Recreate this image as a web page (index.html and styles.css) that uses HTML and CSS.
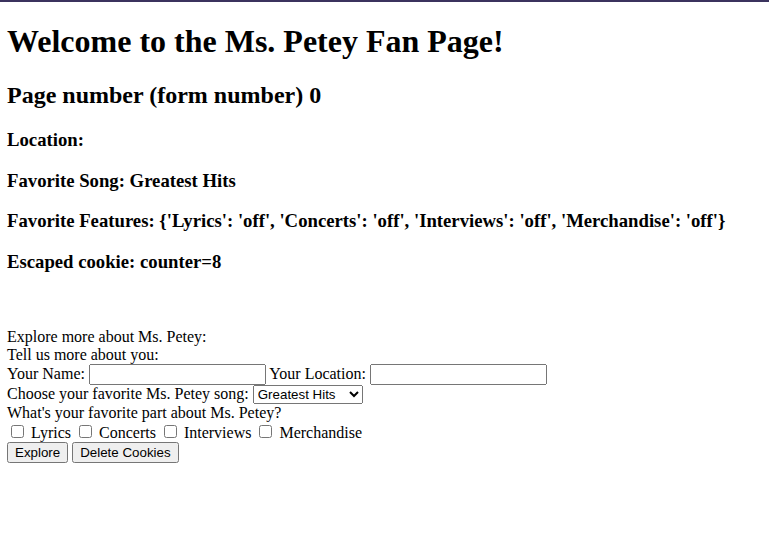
FILE: index.html
```html
<!DOCTYPE html>
<html>
<head>
<meta charset="utf-8">
<title>Ms. Petey Fan Page</title>
<link rel="stylesheet" href="styles.css">
</head>
<body>
<div class="topline"></div>
<div class="page">
<h1>Welcome to the Ms. Petey Fan Page!</h1>
<h2>Page number (form number) 0</h2>
<h3>Location: </h3>
<h3>Favorite Song: Greatest Hits</h3>
<h3>Favorite Features: {'Lyrics': 'off', 'Concerts': 'off', 'Interviews': 'off', 'Merchandise': 'off'}</h3>
<h3>Escaped cookie: counter=8</h3>
<br><br>
<form class="fanform">
Explore more about Ms. Petey:<br>
Tell us more about you:<br>
Your Name: <input type="text" class="field" name="name"> Your Location: <input type="text" class="field" name="location"><br>
Choose your favorite Ms. Petey song: <select class="song" name="song">
<option>Greatest Hits</option>
<option>New Album</option>
</select><br>
What's your favorite part about Ms. Petey?<br>
<input type="checkbox" class="check" name="Lyrics"> Lyrics
<input type="checkbox" class="check" name="Concerts"> Concerts
<input type="checkbox" class="check" name="Interviews"> Interviews
<input type="checkbox" class="check" name="Merchandise"> Merchandise<br>
<input type="submit" class="btn" value="Explore"> <input type="button" class="btn" value="Delete Cookies">
</form>
</div>
</body>
</html>
```
FILE: styles.css
```css
html, body {
  margin: 0;
  padding: 0;
  background: #ffffff;
}
body {
  font-family: "Liberation Serif", "Times New Roman", serif;
  color: #000000;
}
.topline {
  height: 2px;
  background: #3b335e;
}
.page {
  padding: 0 8px 8px 7px;
}
.field, .song, .btn {
  font-family: "Liberation Sans", Arial, sans-serif;
  font-size: 13.333px;
}
.field {
  width: 177px;
  box-sizing: border-box;
}
.song {
  width: 110px;
}
```
